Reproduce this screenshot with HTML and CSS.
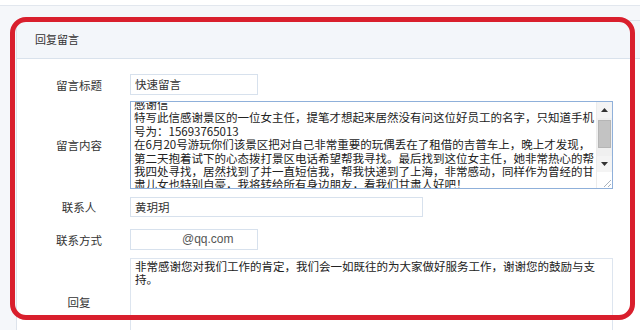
FILE: index.html
```html
<!DOCTYPE html>
<html lang="zh-CN">
<head>
<meta charset="utf-8">
<title>回复留言</title>
<link rel="stylesheet" href="styles.css">
</head>
<body>
<div class="topbar"></div>
<div class="panel">
  <div class="panel-head">回复留言</div>
  <div class="form">
    <div class="row row-tight">
      <div class="label">留言标题</div>
      <div class="input w-short">快速留言</div>
    </div>
    <div class="row">
      <div class="label">留言内容</div>
      <div class="textarea focused">
        <div class="ta-content">
          <div class="ta-scroll">
            <div class="ta-line">感谢信</div>
            <div class="ta-line">特写此信感谢景区的一位女主任，提笔才想起来居然没有问这位好员工的名字，只知道手机</div>
            <div class="ta-line">号为：15693765013</div>
            <div class="ta-line">在6月20号游玩你们该景区把对自己非常重要的玩偶丢在了租借的吉普车上，晚上才发现，</div>
            <div class="ta-line">第二天抱着试下的心态拨打景区电话希望帮我寻找。最后找到这位女主任，她非常热心的帮</div>
            <div class="ta-line">我四处寻找，居然找到了并一直短信我，帮我快递到了上海，非常感动，同样作为曾经的甘</div>
            <div class="ta-line">肃儿女也特别自豪，我将转给所有身边朋友，看我们甘肃人好吧！</div>
          </div>
        </div>
        <div class="scrollbar">
          <div class="sb-btn"><svg width="7" height="4" viewBox="0 0 7 4"><path d="M0 4 L3.5 0 L7 4 Z" fill="#333"/></svg></div>
          <div class="sb-track"><div class="sb-thumb"></div></div>
          <div class="sb-btn"><svg width="7" height="4" viewBox="0 0 7 4"><path d="M0 0 L3.5 4 L7 0 Z" fill="#333"/></svg></div>
          <div class="sb-corner"><svg width="12" height="12" viewBox="0 0 12 12"><path d="M11 4 L4 11 M11 8 L8 11" stroke="#a9b2bd" stroke-width="1"/></svg></div>
        </div>
      </div>
    </div>
    <div class="row row-loose">
      <div class="label">联系人</div>
      <div class="input w-mid h20">黄玥玥</div>
    </div>
    <div class="row">
      <div class="label">联系方式</div>
      <div class="input w-short email">@qq.com</div>
    </div>
    <div class="row">
      <div class="label">回复</div>
      <div class="textarea reply">
        <div class="reply-text">非常感谢您对我们工作的肯定，我们会一如既往的为大家做好服务工作，谢谢您的鼓励与支<br>持。</div>
      </div>
    </div>
  </div>
</div>
<div class="highlight"></div>
</body>
</html>
```
FILE: styles.css
```css
html, body {
  margin: 0;
  padding: 0;
}
body {
  width: 640px;
  height: 330px;
  overflow: hidden;
  background: #f5f7fa;
  font-family: "Noto Sans CJK SC", "Noto Sans", sans-serif;
  color: #333;
  position: relative;
}
.topbar {
  height: 5px;
  background: #fff;
  border-bottom: 1px solid #e2e7ee;
}
.panel {
  margin: 14px 0 0 16px;
  background: #fff;
  border-left: 1px solid #dde3eb;
  border-top: 1px solid #dde3eb;
  height: 309px;
  overflow: hidden;
}
.panel-head {
  height: 37px;
  line-height: 37px;
  padding-left: 18px;
  background: #f3f6fa;
  border-bottom: 1px solid #d9e2ec;
  font-size: 11px;
  color: #333;
}
.form {
  padding-top: 15px;
}
.row {
  display: flex;
  align-items: center;
  margin-bottom: 8px;
}
.row-tight { margin-bottom: 6px; }
.row-loose { margin-bottom: 12px; }
.label {
  width: 102px;
  padding-left: 11px;
  text-align: center;
  font-size: 11.5px;
  color: #333;
  flex: none;
}
.input {
  box-sizing: border-box;
  height: 21px;
  border: 1px solid #d7e1ed;
  padding: 0 4px;
  font-size: 11.5px;
  line-height: 19px;
  color: #333;
  background: #fff;
}
.h20 { height: 20px; line-height: 18px; }
.w-short { width: 128px; }
.w-mid { width: 293px; }
.email {
  padding-left: 51px;
  font-family: "Liberation Sans", Arial, sans-serif;
  font-size: 12px;
  color: #555;
}
.textarea {
  box-sizing: border-box;
  width: 483px;
  height: 88px;
  border: 1px solid #dde5ef;
  background: #fff;
  display: flex;
  overflow: hidden;
  flex: none;
}
.textarea.focused {
  border-color: #8fb0da;
}
.ta-content {
  flex: 1;
  overflow: hidden;
  padding: 0 3px;
}
.ta-scroll {
  margin-top: -4px;
  font-size: 11.5px;
  color: #222;
}
.ta-line {
  height: 13.4px;
  line-height: 13.4px;
  white-space: nowrap;
}
.scrollbar {
  width: 15px;
  flex: none;
  display: flex;
  flex-direction: column;
  background: #f2f2f2;
  border-left: 1px solid #ececec;
}
.sb-btn {
  height: 16px;
  display: flex;
  align-items: center;
  justify-content: center;
  background: #f4f4f4;
}
.sb-track {
  flex: 1;
  padding-top: 2px;
  background: #f0f0f0;
}
.sb-thumb {
  height: 28px;
  margin: 0 1px;
  background: #c3c3c3;
  border: 1px solid #b5b5b5;
  box-sizing: border-box;
}
.sb-corner {
  height: 16px;
  background: #fff;
  display: flex;
  align-items: flex-end;
  justify-content: flex-end;
}
.reply-text {
  padding: 1px 4px;
  font-size: 11.5px;
  line-height: 13px;
  color: #222;
  white-space: nowrap;
}
.highlight {
  position: absolute;
  left: 10px;
  top: 17px;
  width: 625px;
  height: 303px;
  box-sizing: border-box;
  border: 5px solid #d91f2d;
  border-radius: 16px;
  pointer-events: none;
}
```
